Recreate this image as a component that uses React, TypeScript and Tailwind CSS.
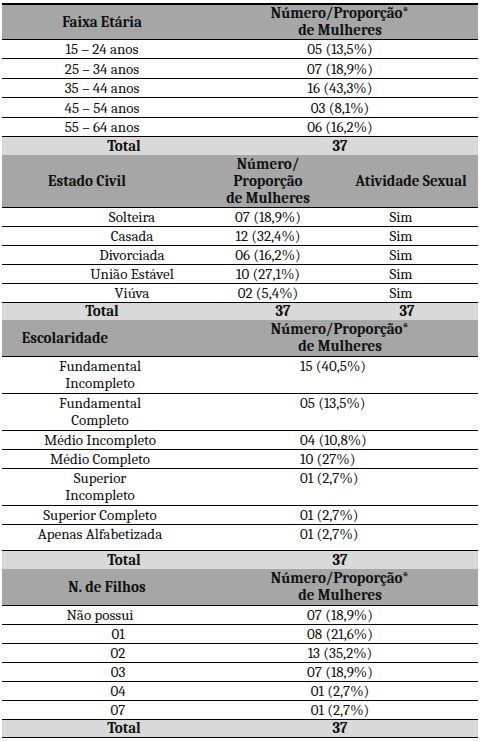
import type { ReactNode } from "react";

type BodyRow = { a: ReactNode; b: ReactNode; h: string };

const faixa: BodyRow[] = [
  { a: "15 – 24 anos", b: "05 (13,5%)", h: "h-[19px]" },
  { a: "25 – 34 anos", b: "07 (18,9%)", h: "h-[20px]" },
  { a: "35 – 44 anos", b: "16 (43,3%)", h: "h-[19px]" },
  { a: "45 – 54 anos", b: "03 (8,1%)", h: "h-[20px]" },
  { a: "55 – 64 anos", b: "06 (16,2%)", h: "h-[19px]" },
];

const estado = [
  { a: "Solteira", b: "07 (18,9%)" },
  { a: "Casada", b: "12 (32,4%)" },
  { a: "Divorciada", b: "06 (16,2%)" },
  { a: "União Estável", b: "10 (27,1%)" },
  { a: "Viúva", b: "02 (5,4%)" },
];

const escola: BodyRow[] = [
  { a: <>Fundamental<br />Incompleto</>, b: "15 (40,5%)", h: "h-[37px]" },
  { a: <>Fundamental<br />Completo</>, b: "05 (13,5%)", h: "h-[37px]" },
  { a: "Médio Incompleto", b: "04 (10,8%)", h: "h-[19px]" },
  { a: "Médio Completo", b: "10 (27%)", h: "h-[19px]" },
  { a: <>Superior<br />Incompleto</>, b: "01 (2,7%)", h: "h-[37px]" },
  { a: "Superior Completo", b: "01 (2,7%)", h: "h-[19px]" },
  { a: "Apenas Alfabetizada", b: "01 (2,7%)", h: "h-[26px]" },
];

const filhos = [
  { a: "Não possui", b: "07 (18,9%)", pad: "pr-[4px]" },
  { a: "01", b: "08 (21,6%)", pad: "pl-[32px]" },
  { a: "02", b: "13 (35,2%)", pad: "pl-[32px]" },
  { a: "03", b: "07 (18,9%)", pad: "pl-[32px]" },
  { a: "04", b: "01 (2,7%)", pad: "pl-[32px]" },
  { a: "07", b: "01 (2,7%)", pad: "pl-[32px]" },
];

function Total({ last }: { last?: boolean }) {
  return (
    <div
      className={`grid grid-cols-[200px_1fr] h-[18px] items-center bg-[#d9d9d9] font-bold leading-[17px] ${
        last ? "border-b border-black" : ""
      }`}
    >
      <div className="text-center pl-[44px]">Total</div>
      <div className="text-center">37</div>
    </div>
  );
}

function PropHeader({ label, pad }: { label: string; pad: string }) {
  return (
    <div className="grid grid-cols-[200px_1fr] h-[37px] items-center bg-[#a6a6a6] border-b border-black font-bold leading-[17px]">
      <div className={`text-center ${pad}`}>{label}</div>
      <div className="text-center">
        Número/Proporção*
        <br />
        de Mulheres
      </div>
    </div>
  );
}

export default function App() {
  return (
    <div className="bg-white w-[480px] h-[741px] pt-[3px] text-[15px] text-[#111] font-serif font-[family-name:'Liberation_Serif',serif]">
      <div className="ml-[2px] w-[476px]">
        {/* Faixa etária */}
        <div className="border-t-2 border-black">
          <div className="grid grid-cols-[200px_1fr] h-[35px] items-center bg-[#a6a6a6] border-b border-black font-bold leading-[17px]">
            <div className="text-center">Faixa Etária</div>
            <div className="text-center">
              Número/Proporção*
              <br />
              de Mulheres
            </div>
          </div>
        </div>
        {faixa.map((r) => (
          <div
            key={String(r.b)}
            className={`grid grid-cols-[200px_1fr] items-center border-b border-black leading-[18px] ${r.h}`}
          >
            <div className="text-center">{r.a}</div>
            <div className="text-center">{r.b}</div>
          </div>
        ))}
        <Total />

        {/* Estado civil */}
        <div className="grid grid-cols-[210px_112px_1fr] h-[53px] items-center bg-[#a6a6a6] border-b border-black font-bold leading-[17px]">
          <div className="text-center pr-[40px]">Estado Civil</div>
          <div className="text-center">
            Número/
            <br />
            Proporção
            <br />
            de Mulheres
          </div>
          <div className="text-center pl-[20px]">Atividade Sexual</div>
        </div>
        {estado.map((r) => (
          <div
            key={r.a}
            className="grid grid-cols-[210px_112px_1fr] h-[19px] items-center border-b border-black leading-[18px]"
          >
            <div className="text-center pl-[50px]">{r.a}</div>
            <div className="text-center">{r.b}</div>
            <div className="text-center">Sim</div>
          </div>
        ))}
        <div className="grid grid-cols-[210px_112px_1fr] h-[17px] items-center bg-[#d9d9d9] font-bold leading-[17px]">
          <div className="text-center pr-[10px]">Total</div>
          <div className="text-center pl-[30px]">37</div>
          <div className="text-center pl-[12px]">37</div>
        </div>

        {/* Escolaridade */}
        <PropHeader label="Escolaridade" pad="pr-[74px]" />
        {escola.map((r) => (
          <div
            key={String(r.b) + r.h + String(typeof r.a)}
            className={`grid grid-cols-[200px_1fr] items-start pt-[1px] border-b border-black leading-[17px] ${r.h}`}
          >
            <div className="text-center pr-[4px]">{r.a}</div>
            <div className="pl-[98px]">{r.b}</div>
          </div>
        ))}
        <Total />

        {/* Filhos */}
        <PropHeader label="N. de Filhos" pad="pl-[10px]" />
        {filhos.map((r) => (
          <div
            key={r.a}
            className="grid grid-cols-[200px_1fr] h-[19px] items-center border-b border-black leading-[18px]"
          >
            <div className={`text-center ${r.pad}`}>{r.a}</div>
            <div className="text-center">{r.b}</div>
          </div>
        ))}
        <Total last />
      </div>
    </div>
  );
}
